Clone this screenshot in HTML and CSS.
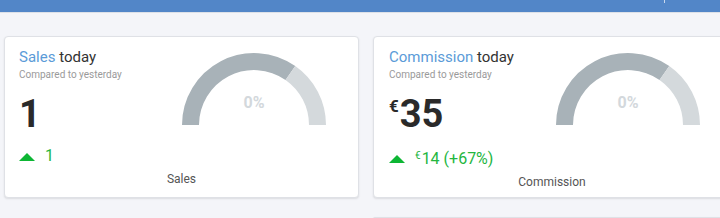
FILE: index.html
```html
<!DOCTYPE html>
<html>
<head>
<meta charset="utf-8">
<link rel="stylesheet" href="styles.css">
</head>
<body>
<header class="topbar"><span class="tick"></span></header>
<main class="grid">
  <section class="card">
    <div class="top">
      <div class="info">
        <div class="title"><span class="hl">Sales</span> today</div>
        <div class="sub">Compared to yesterday</div>
        <div class="big">1</div>
      </div>
      <div class="gauge">
        <svg width="144" height="72" viewBox="0 0 144 72">
          <path d="M8.5 72 A63.5 63.5 0 0 1 108.4 20" fill="none" stroke="#a8b2b8" stroke-width="17"/>
          <path d="M108.4 20 A63.5 63.5 0 0 1 135.5 72" fill="none" stroke="#d4d9dc" stroke-width="17"/>
        </svg>
        <span class="pct">0%</span>
      </div>
    </div>
    <div class="delta"><span class="tri"></span><span>1</span></div>
    <div class="label">Sales</div>
  </section>
  <section class="card wide">
    <div class="top">
      <div class="info">
        <div class="title"><span class="hl">Commission</span> today</div>
        <div class="sub">Compared to yesterday</div>
        <div class="big"><span class="cur">€</span>35</div>
      </div>
      <div class="gauge">
        <svg width="144" height="72" viewBox="0 0 144 72">
          <path d="M8.5 72 A63.5 63.5 0 0 1 108.4 20" fill="none" stroke="#a8b2b8" stroke-width="17"/>
          <path d="M108.4 20 A63.5 63.5 0 0 1 135.5 72" fill="none" stroke="#d4d9dc" stroke-width="17"/>
        </svg>
        <span class="pct">0%</span>
      </div>
    </div>
    <div class="delta"><span class="tri"></span><span><span class="cur-s">€</span>14 (+67%)</span></div>
    <div class="label">Commission</div>
  </section>
  <div></div>
  <section class="card stub"></section>
</main>
</body>
</html>
```
FILE: styles.css
```css
html, body {
  margin: 0;
  padding: 0;
}
body {
  background: #f4f5f9;
  font-family: Roboto, "Liberation Sans", Arial, sans-serif;
  width: 720px;
  height: 218px;
  overflow: hidden;
}
.topbar {
  height: 12px;
  background: #5286c8;
  border-bottom: 1px solid #dde1e8;
  display: flex;
  justify-content: flex-end;
}
.tick {
  width: 1px;
  height: 3px;
  background: #c9d8ee;
  margin-right: 55px;
}
.grid {
  display: grid;
  grid-template-columns: 355px 357px;
  column-gap: 14px;
  row-gap: 19px;
  padding: 23px 0 0 4px;
}
.card {
  box-sizing: border-box;
  height: 162px;
  background: #fff;
  border: 1px solid #dfe1e6;
  border-radius: 4px;
  box-shadow: 0 1px 2px rgba(0, 0, 0, 0.10);
  padding: 11px 14px 0 14px;
  display: flex;
  flex-direction: column;
}
.wide {
  padding-left: 15px;
}
.wide .gauge {
  margin-right: 15px;
}
.stub {
  height: 2px;
  padding: 0;
  border-bottom: 0;
  border-radius: 4px 4px 0 0;
}
.top {
  display: flex;
  justify-content: space-between;
  align-items: flex-start;
}
.title {
  font-size: 15px;
  line-height: 18px;
  color: #333;
}
.hl {
  color: #5b9bd8;
}
.sub {
  font-size: 10px;
  line-height: 12px;
  color: #9a9a9a;
  margin-top: 3px;
}
.big {
  font-size: 38px;
  line-height: 44px;
  font-weight: 700;
  color: #2a2a2a;
  margin-top: 11px;
  display: flex;
  align-items: flex-start;
}
.cur {
  font-size: 17px;
  line-height: 17px;
  margin-top: 6px;
  margin-right: 1px;
}
.gauge {
  position: relative;
  width: 144px;
  height: 72px;
  margin-top: 5px;
  margin-right: 18px;
}
.gauge svg {
  display: block;
}
.pct {
  position: absolute;
  left: 0;
  right: 0;
  top: 40px;
  text-align: center;
  font-size: 16px;
  font-weight: 700;
  color: #d3d8dc;
}
.delta {
  display: flex;
  align-items: center;
  gap: 10px;
  font-size: 16px;
  line-height: 20px;
  color: #24b63f;
  margin-top: 10px;
}
.tri {
  width: 0;
  height: 0;
  border-left: 8.5px solid transparent;
  border-right: 8.5px solid transparent;
  border-bottom: 8px solid #0db634;
  margin-top: 2px;
}
.cur-s {
  font-size: 10px;
  vertical-align: 5px;
  margin-right: 1px;
}
.label {
  font-size: 12px;
  line-height: 14px;
  color: #555;
  text-align: center;
  margin-top: 6px;
}
```
